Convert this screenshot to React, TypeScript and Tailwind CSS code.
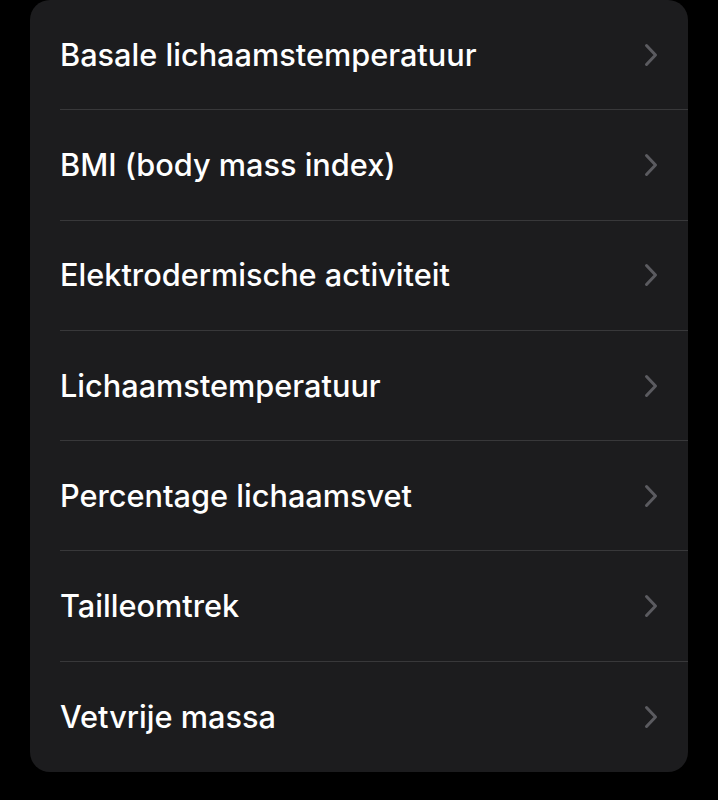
const ITEMS = [
  "Basale lichaamstemperatuur",
  "BMI (body mass index)",
  "Elektrodermische activiteit",
  "Lichaamstemperatuur",
  "Percentage lichaamsvet",
  "Tailleomtrek",
  "Vetvrije massa",
];

function Chevron() {
  return (
    <svg width="14" height="24" viewBox="0 0 14 24" fill="none" className="shrink-0">
      <path d="M2.5 2.5L11.5 12L2.5 21.5" stroke="#5b5b60" strokeWidth="3" strokeLinecap="round" strokeLinejoin="round" />
    </svg>
  );
}

export default function App() {
  return (
    <div className="min-h-[800px] w-[718px] bg-black px-[30px] pb-[28px]" style={{ fontFamily: "Inter, 'Noto Sans', sans-serif" }}>
      <div className="rounded-[20px] bg-[#1c1c1e] pl-[30px]">
        {ITEMS.map((label, i) => (
          <div key={label} className={`flex h-[110.3px] items-center pr-[30px] ${i < ITEMS.length - 1 ? "border-b border-[#38383a]" : ""}`}>
            <span className="flex-1 text-[30.7px] font-medium text-white">{label}</span>
            <Chevron />
          </div>
        ))}
      </div>
    </div>
  );
}
